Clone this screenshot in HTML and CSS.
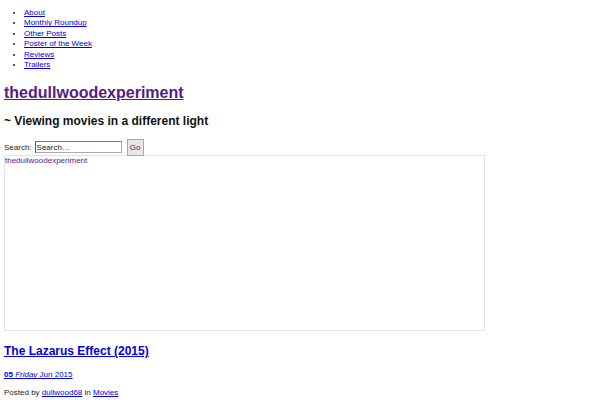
FILE: index.html
```html
<!DOCTYPE html>
<html lang="en">

<head>
    <meta charset="UTF-8">
    <title>thedullwoodexperiment</title>
    <link rel="stylesheet" href="styles.css">
</head>

<body>
    <ul class="menu">
        <li><a href="#">About</a></li>
        <li><a href="#">Monthly Roundup</a></li>
        <li><a href="#">Other Posts</a></li>
        <li><a href="#">Poster of the Week</a></li>
        <li><a href="#">Reviews</a></li>
        <li><a href="#">Trailers</a></li>
    </ul>

    <h1 class="site-title"><a href="#" class="visited">thedullwoodexperiment</a></h1>
    <h2 class="site-desc">~ Viewing movies in a different light</h2>

    <form class="search">
        <label>Search:</label>
        <input type="text" value="Search…">
        <button type="button">Go</button>
    </form>

    <div class="header-img">
        <a href="#" class="visited">thedullwoodexperiment</a>
    </div>

    <div class="post">
        <h2 class="post-title"><a href="#">The Lazarus Effect (2015)</a></h2>
        <p class="post-date"><a href="#"><b>05</b> <i>Friday</i> Jun 2015</a></p>
        <p class="post-meta">Posted by <a href="#">dullwood68</a> in <a href="#">Movies</a></p>
    </div>
</body>

</html>
```

FILE: styles.css
```css
body {
    margin: 0 4px;
    padding: 0;
    font-family: "Liberation Sans", Arial, sans-serif;
    font-size: 8px;
    color: #222;
}

a {
    color: #0000ee;
}

a.visited {
    color: #551a8b;
}

.menu {
    margin: 8px 0 0;
    padding-left: 20px;
    line-height: 10.4px;
}

.site-title {
    margin: 13px 0 0;
    font-size: 16px;
    font-weight: bold;
    line-height: 20px;
}

.site-desc {
    margin: 10px 0 0;
    font-size: 12px;
    font-weight: bold;
    color: #111;
    line-height: 16px;
}

.search {
    margin: 10px 0 0;
    display: flex;
    align-items: center;
    height: 16px;
}

.search label {
    margin-right: 3px;
}

.search input {
    width: 87px;
    height: 12px;
    padding: 0 1px;
    font: 8px "Liberation Sans", Arial, sans-serif;
    color: #222;
    border: 1px solid #aaa;
    border-left-color: #555;
    border-top-color: #777;
    box-sizing: border-box;
}

.search button {
    margin-left: 5px;
    height: 17px;
    width: 17px;
    padding: 0;
    font: 8px "Liberation Sans", Arial, sans-serif;
    color: #333;
    background: #e6e6e6;
    border: 1px solid #aaa;
}

.header-img {
    width: 481px;
    height: 176px;
    border: 1px solid #e4e4e4;
    box-sizing: border-box;
    font-size: 8px;
    line-height: 10px;
}

.header-img a {
    text-decoration: none;
}

.post-title {
    margin: 13px 0 0;
    font-size: 12px;
    font-weight: bold;
    line-height: 15px;
}

.post-date {
    margin: 11px 0 0;
    font-size: 8px;
}

.post-meta {
    margin: 9px 0 0;
    font-size: 8px;
}
```
